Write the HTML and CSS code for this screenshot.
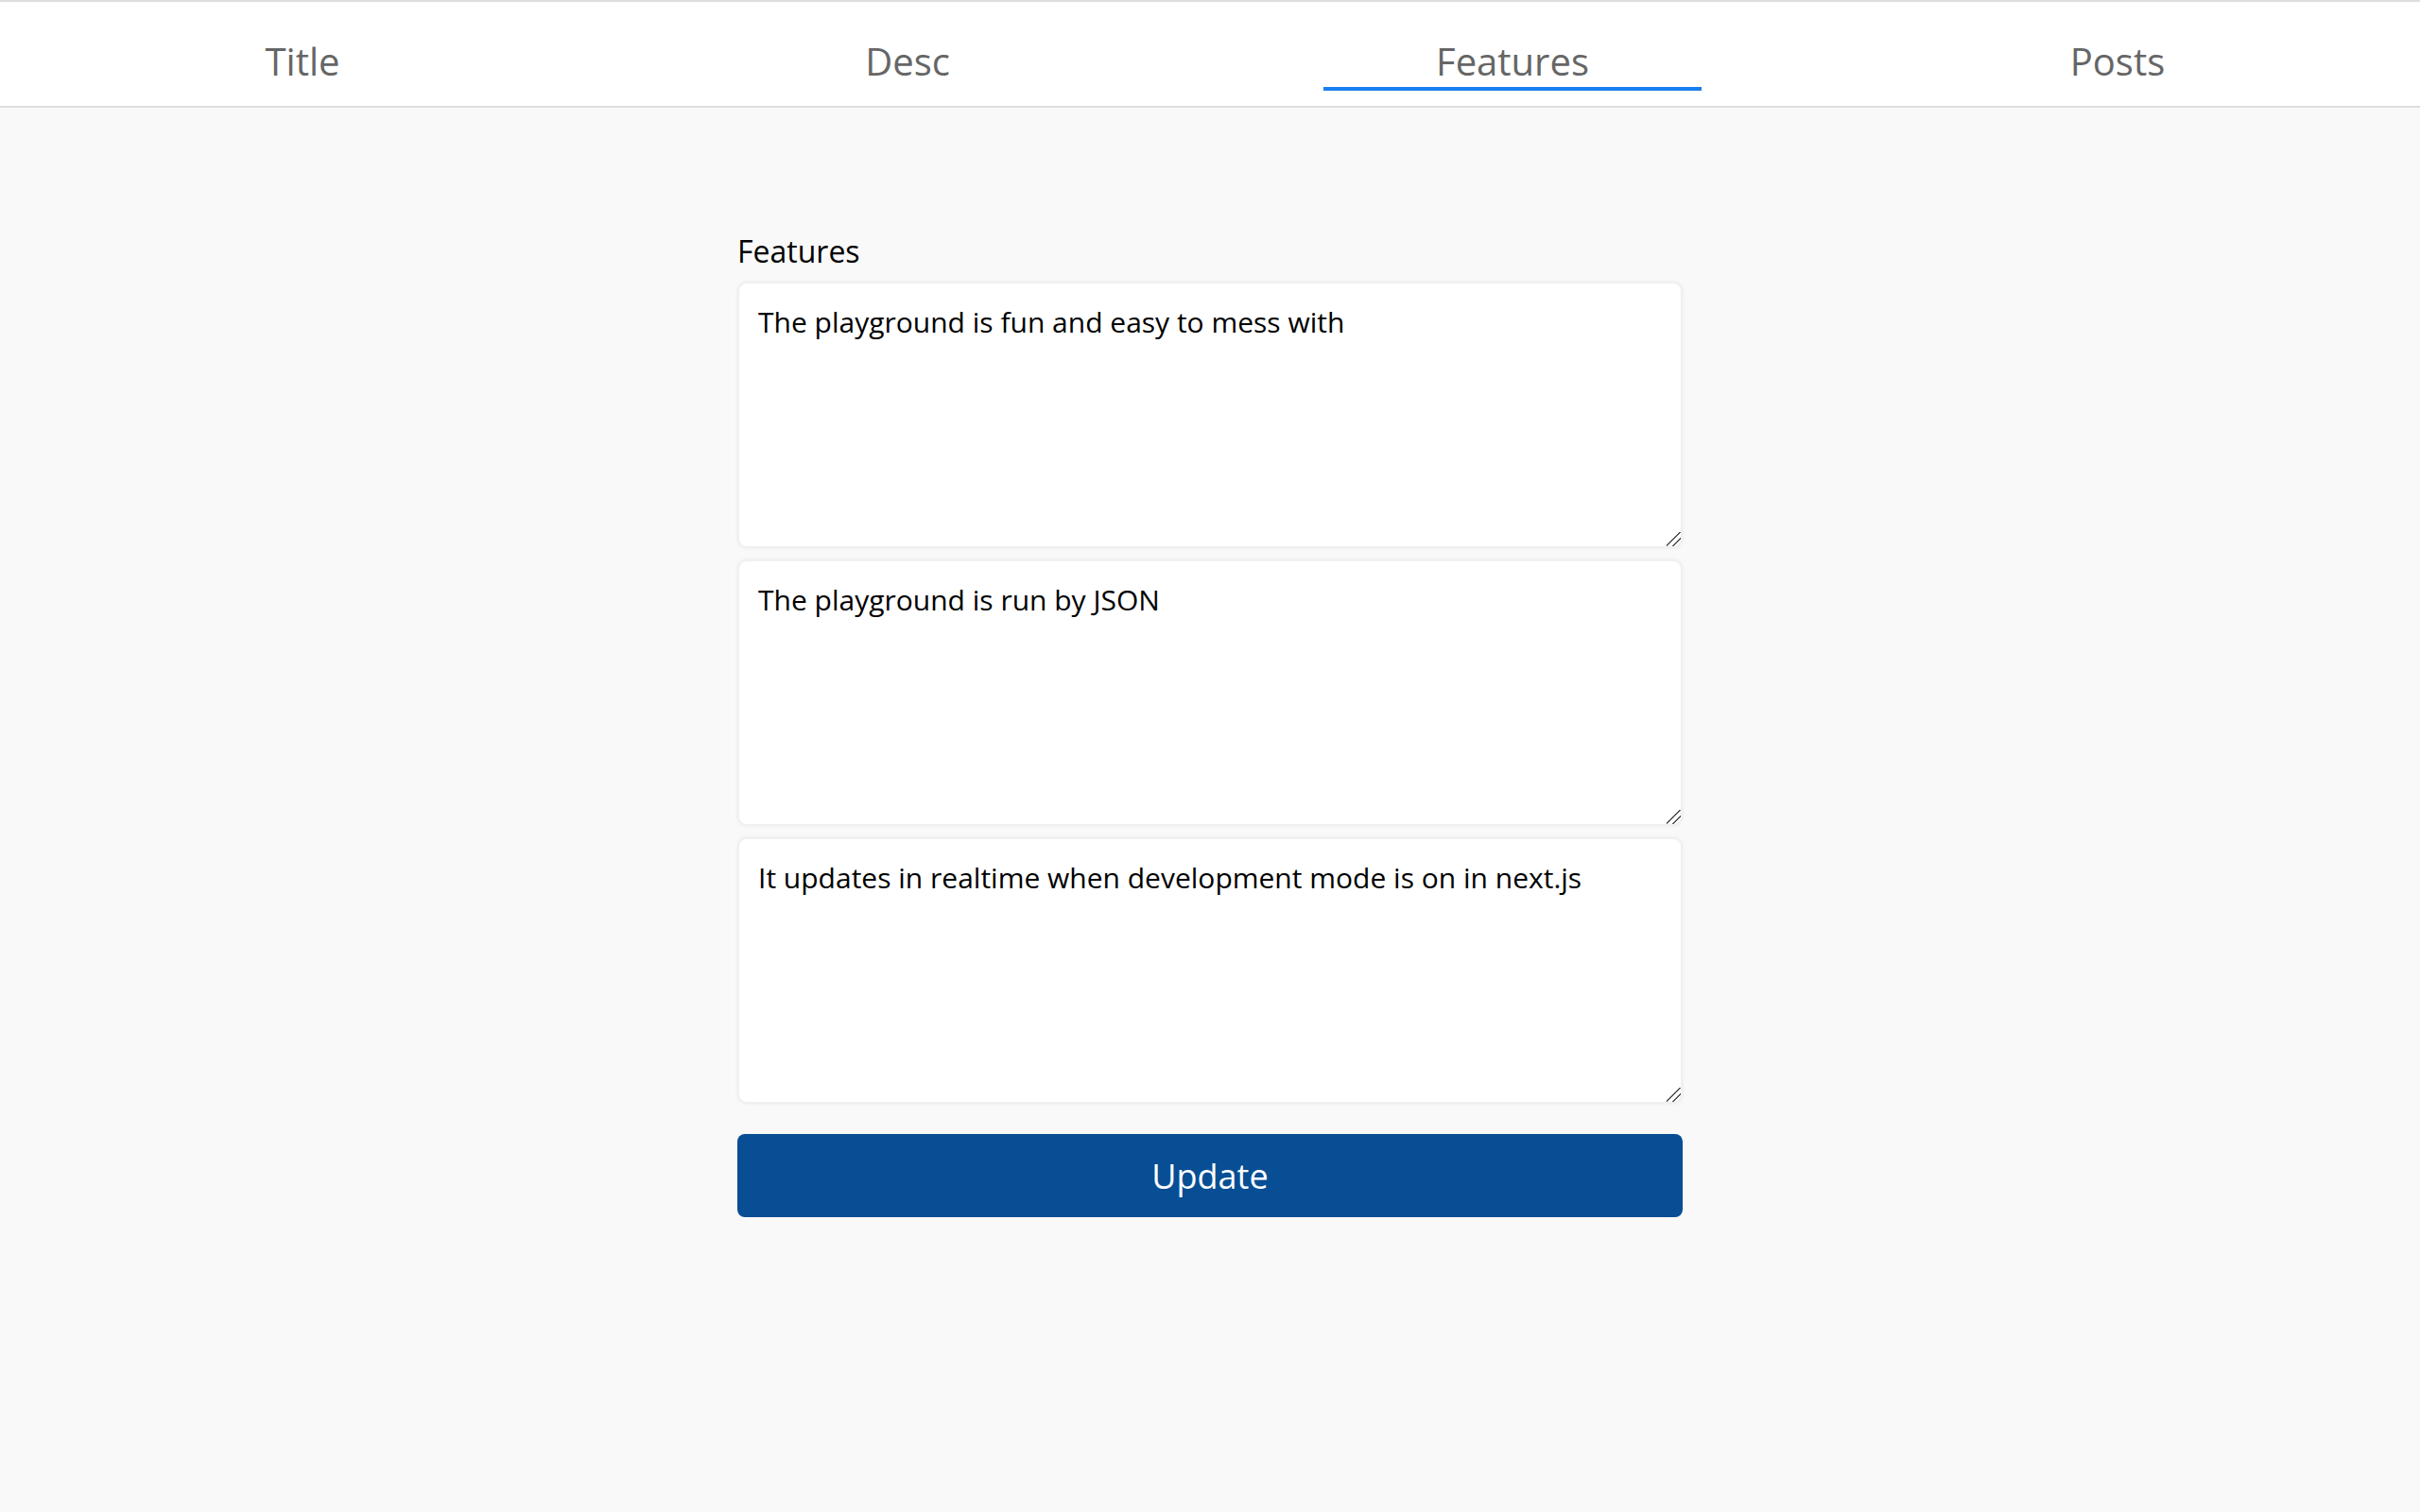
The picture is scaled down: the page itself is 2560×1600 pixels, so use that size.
FILE: index.html
```html
<!DOCTYPE html>
<html lang="en">
<head>
<meta charset="utf-8">
<title>Features</title>
<link rel="stylesheet" href="styles.css">
</head>
<body>
<nav class="tabs">
  <a class="tab"><span class="tab-label">Title</span></a>
  <a class="tab"><span class="tab-label">Desc</span></a>
  <a class="tab active"><span class="tab-label">Features</span></a>
  <a class="tab"><span class="tab-label">Posts</span></a>
</nav>
<main class="content">
  <form class="form">
    <label class="label">Features</label>
    <div class="fields">
      <textarea class="field">The playground is fun and easy to mess with</textarea>
      <textarea class="field">The playground is run by JSON</textarea>
      <textarea class="field">It updates in realtime when development mode is on in next.js</textarea>
    </div>
    <button type="button" class="button">Update</button>
  </form>
</main>
</body>
</html>
```

FILE: styles.css
```css
html, body {
  margin: 0;
  padding: 0;
}
body {
  background: #f9f9f9;
  font-family: "Open Sans", "Noto Sans", sans-serif;
  min-height: 1600px;
}
.tabs {
  display: grid;
  grid-template-columns: repeat(4, 1fr);
  height: 110px;
  background: #ffffff;
  border-top: 2px solid #dddddd;
  border-bottom: 2px solid #dddddd;
}
.tab {
  display: flex;
  justify-content: center;
  align-items: flex-start;
  padding-top: 36px;
  color: #666666;
  font-size: 40px;
  line-height: 54px;
  cursor: pointer;
}
.tab-label {
  display: block;
  width: 400px;
  text-align: center;
  border-bottom: 4px solid transparent;
}
.tab.active .tab-label {
  border-bottom-color: #1a7ff0;
}
.content {
  display: flex;
  justify-content: center;
  padding-top: 130px;
}
.form {
  width: 1000px;
  display: flex;
  flex-direction: column;
}
.label {
  display: block;
  font-size: 32px;
  line-height: 44px;
  color: #000000;
  margin-bottom: 10px;
}
.fields {
  display: flex;
  flex-direction: column;
  gap: 12px;
}
.field {
  box-sizing: border-box;
  width: 100%;
  height: 282px;
  margin: 0;
  padding: 20px 20px;
  font-family: "Open Sans", "Noto Sans", sans-serif;
  font-size: 30px;
  line-height: 41px;
  color: #000000;
  background: #ffffff;
  border: 2px solid #f0f0f0;
  border-radius: 10px;
  box-shadow: 0 0 4px rgba(0, 0, 0, 0.06);
  outline: none;
}
.field::-webkit-resizer {
  background: linear-gradient(135deg,
    transparent 0%, transparent 44%,
    #555555 44%, #555555 52%,
    transparent 52%, transparent 68%,
    #555555 68%, #555555 76%,
    transparent 76%);
}
.button {
  margin-top: 32px;
  height: 88px;
  width: 100%;
  border: none;
  border-radius: 8px;
  background: #084e94;
  color: #ffffff;
  font-family: "Open Sans", "Noto Sans", sans-serif;
  font-size: 36px;
  cursor: pointer;
}
```
